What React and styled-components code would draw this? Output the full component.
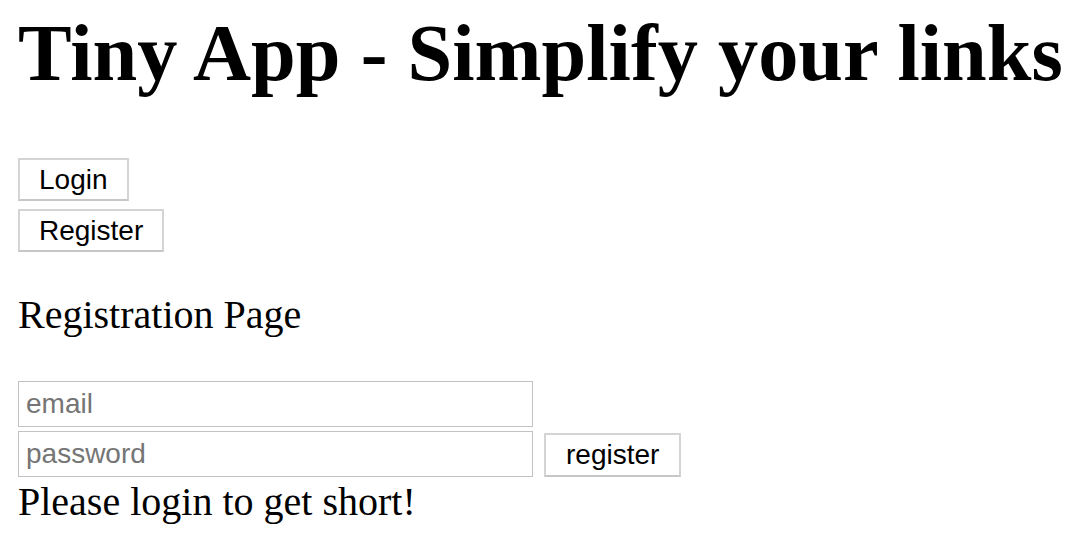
import React from "react";
import styled, { createGlobalStyle } from "styled-components";

const GlobalStyle = createGlobalStyle`
  body {
    margin: 0;
    background: #ffffff;
    color: #000000;
    font-family: "Liberation Serif", "Times New Roman", serif;
    font-size: 40px;
  }
`;

const Page = styled.div`
  padding: 0 18px;
`;

const Title = styled.h1`
  margin: 7px 0 0;
  font-size: 80.4px;
  line-height: 92px;
  font-weight: bold;
  white-space: nowrap;
`;

const Nav = styled.div`
  display: flex;
  flex-direction: column;
  align-items: flex-start;
  gap: 8px;
  margin-top: 59px;
`;

const Button = styled.button`
  height: ${props => (props.small ? "44px" : "43px")};
  padding: 0 ${props => (props.small ? "20px" : "19px")};
  border: 2px solid #d4d4d4;
  border-bottom-color: #c6c6c6;
  background: #ffffff;
  color: #000000;
  font-family: "Liberation Sans", Arial, sans-serif;
  font-size: 28px;
  line-height: 1;
  cursor: pointer;
`;

const Heading = styled.p`
  margin: 40px 0 0;
  line-height: 46px;
`;

const Form = styled.form`
  display: flex;
  flex-direction: column;
  gap: 4px;
  margin-top: 43px;
`;

const Row = styled.div`
  display: flex;
  align-items: flex-end;
  gap: 11px;
`;

const Input = styled.input`
  box-sizing: border-box;
  width: 515px;
  height: 46px;
  padding: 0 7px;
  border: 1px solid #c2c2c2;
  font-family: "Liberation Sans", Arial, sans-serif;
  font-size: 28px;
  color: #000000;
  outline: none;

  &::placeholder {
    color: #757575;
  }
`;

const Message = styled.div`
  margin-top: 2px;
  line-height: 46px;
`;

export default function App() {
  return (
    <Page>
      <GlobalStyle />
      <Title>Tiny App - Simplify your links</Title>

      <Nav>
        <Button type="button">Login</Button>
        <Button type="button">Register</Button>
      </Nav>

      <Heading>Registration Page</Heading>

      <Form onSubmit={e => e.preventDefault()}>
        <Row>
          <Input type="text" name="email" placeholder="email" />
        </Row>
        <Row>
          <Input type="password" name="password" placeholder="password" />
          <Button small type="submit">register</Button>
        </Row>
      </Form>

      <Message>Please login to get short!</Message>
    </Page>
  );
}
